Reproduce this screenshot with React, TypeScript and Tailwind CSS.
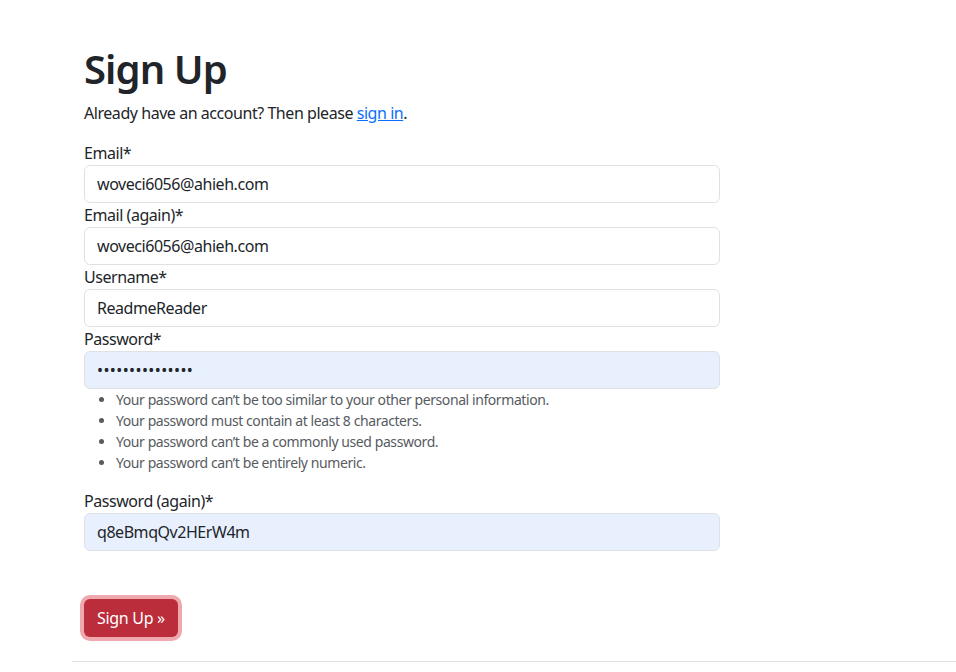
import React from 'react';

const font = { fontFamily: '"Noto Sans", "Open Sans", sans-serif' };

const Field: React.FC<{ label: string; value: string; type?: string; autofill?: boolean }> = ({
  label,
  value,
  type = 'text',
  autofill = false,
}) => (
  <div>
    <label className="block text-base leading-6 tracking-[-0.45px] text-[#212529]">{label}</label>
    <input
      type={type}
      value={value}
      readOnly
      className={`block h-[38px] w-full rounded-md border border-[#dee2e6] px-3 text-base text-[#212529] outline-none ${
        autofill ? 'bg-[#e8f0fe]' : 'bg-white'
      } ${type === 'password' ? 'tracking-[0.4px]' : 'tracking-[-0.45px]'}`}
    />
  </div>
);

export default function App() {
  const hints = [
    'Your password can’t be too similar to your other personal information.',
    'Your password must contain at least 8 characters.',
    'Your password can’t be a commonly used password.',
    'Your password can’t be entirely numeric.',
  ];

  return (
    <div className="min-h-[672px] bg-white pt-[45px] text-[#212529]" style={font}>
      <div className="pl-[72px]">
        <div className="w-[648px] pl-3">
          <h1 className="text-[40px] font-semibold leading-[48px] tracking-[-0.9px]">Sign Up</h1>
          <p className="mt-2 text-base leading-6 tracking-[-0.45px]">
            Already have an account? Then please{' '}
            <a href="#" className="text-[#0d6efd] underline">
              sign in
            </a>
            .
          </p>

          <form className="mt-4">
            <Field label="Email*" value="woveci6056@ahieh.com" />
            <Field label="Email (again)*" value="woveci6056@ahieh.com" />
            <Field label="Username*" value="ReadmeReader" />
            <Field label="Password*" value="qwertyuiopasdfg" type="password" autofill />
            <ul className="mb-4 list-disc pl-8 text-sm leading-[21px] tracking-[-0.42px] text-[#575b5f] marker:text-[#575b5f]">
              {hints.map((h) => (
                <li key={h}>{h}</li>
              ))}
            </ul>
            <Field label="Password (again)*" value="q8eBmqQv2HErW4m" autofill />

            <button
              type="button"
              className="mt-12 h-[38px] rounded-md bg-[#bb2d3b] px-[13px] text-base tracking-[-0.3px] text-white ring-4 ring-[#f0a8af]"
            >
              Sign Up »
            </button>
          </form>
        </div>
        <hr className="mt-6 border-t border-[#dee2e6]" />
      </div>
    </div>
  );
}
